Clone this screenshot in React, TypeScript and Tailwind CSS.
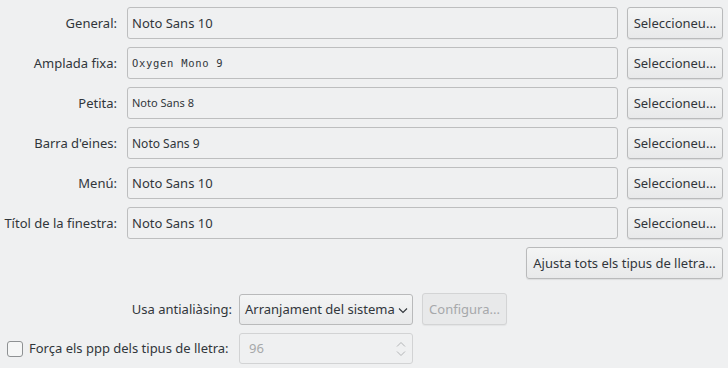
import React from "react";

const rows: { label: string; value: string; cls: string }[] = [
  { label: "General:", value: "Noto Sans 10", cls: "text-[13px]" },
  { label: "Amplada fixa:", value: "Oxygen Mono 9", cls: "text-[10.5px] font-['DejaVu_Sans_Mono',monospace] tracking-[0.7px]" },
  { label: "Petita:", value: "Noto Sans 8", cls: "text-[11px]" },
  { label: "Barra d'eines:", value: "Noto Sans 9", cls: "text-[12px]" },
  { label: "Menú:", value: "Noto Sans 10", cls: "text-[13px]" },
  { label: "Títol de la finestra:", value: "Noto Sans 10", cls: "text-[13px]" },
];

const btn =
  "h-[32px] rounded-[3px] border border-[#b9babb] bg-gradient-to-b from-[#f4f5f5] to-[#e8e9ea] shadow-[0_1px_1px_rgba(0,0,0,0.08)] text-[13px] text-[#31363b] flex items-center justify-center pt-[1px]";

export default function App() {
  return (
    <div className="w-[728px] h-[368px] bg-[#eff0f1] font-['Noto_Sans',sans-serif] text-[#31363b] text-[13px] pt-[7px] overflow-hidden">
      <div className="flex flex-col gap-[8px]">
        {rows.map((r) => (
          <div key={r.label} className="flex items-center h-[32px]">
            <div className="w-[117px] text-right pt-[1px]">{r.label}</div>
            <div className="ml-[10px] flex-1 h-[32px] border border-[#bdbebf] rounded-[3px] bg-[#eff0f1] flex items-center pl-[4px] pt-[1px]">
              <span className={r.cls}>{r.value}</span>
            </div>
            <div className={`${btn} ml-[9px] w-[96px] mr-[5px]`}>Seleccioneu...</div>
          </div>
        ))}
      </div>
      <div className="flex justify-end mt-[8px] mr-[5px]">
        <div className={`${btn} w-[197px]`}>Ajusta tots els tipus de lletra...</div>
      </div>
      <div className="flex items-center mt-[14px] h-[32px]">
        <div className="w-[232px] text-right pt-[1px]">Usa antialiàsing:</div>
        <div className="ml-[7px] w-[174px] h-[31px] border border-[#b9babb] rounded-[3px] bg-gradient-to-b from-[#f4f5f5] to-[#e8e9ea] flex items-center pl-[5px] pr-[4px] justify-between pt-[1px]">
          <span>Arranjament del sistema</span>
          <svg width="10" height="7" viewBox="0 0 10 7" className="mt-[1px]">
            <path d="M1 1.5 L5 5.5 L9 1.5" fill="none" stroke="#31363b" strokeWidth="1.1" />
          </svg>
        </div>
        <div className="ml-[9px] w-[85px] h-[32px] rounded-[3px] border border-[#d3d4d5] bg-[#e8e9ea] text-[#a6a8aa] flex items-center justify-center shadow-[0_1px_1px_rgba(0,0,0,0.05)] pt-[1px]">
          Configura...
        </div>
      </div>
      <div className="flex items-center mt-[8px] h-[31px]">
        <div className="ml-[7px] w-[16px] h-[16px] rounded-[3px] border border-[#8e9193] bg-[#f5f6f6]" />
        <div className="ml-[6px] w-[203px] pt-[1px]">Força els ppp dels tipus de lletra:</div>
        <div className="ml-[7px] w-[174px] h-[31px] border border-[#d2d3d4] rounded-[3px] bg-[#eff0f1] flex items-center justify-between pl-[9px] pr-[5px] text-[#a6a8aa]">
          <span className="pt-[1px]">96</span>
          <svg width="12" height="18" viewBox="0 0 12 18">
            <path d="M2 6.5 L6 2.5 L10 6.5" fill="none" stroke="#b3b5b7" strokeWidth="1" />
            <path d="M2 11.5 L6 15.5 L10 11.5" fill="none" stroke="#b3b5b7" strokeWidth="1" />
          </svg>
        </div>
      </div>
    </div>
  );
}
